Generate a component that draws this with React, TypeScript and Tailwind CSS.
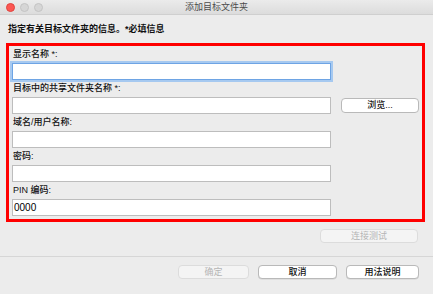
import React from 'react'

const font = { fontFamily: '"Liberation Sans", "Noto Sans CJK SC", sans-serif' }

function Field({ label, value, focused, children }: { label: string; value?: string; focused?: boolean; children?: React.ReactNode }) {
  return (
    <div className="flex flex-col">
      <div className="h-[17px] flex items-center pl-[1px] text-[9px] font-medium text-[#111] leading-none">{label}</div>
      <div className="flex items-center">
        <div
          className={
            focused
              ? 'w-[319px] h-[17px] bg-white border border-[#6ea4e4] ring-2 ring-[#a6c9f0] flex items-center px-[1px] text-[10px] text-black'
              : 'w-[319px] h-[17px] bg-white border border-[#bdbdbd] flex items-center px-[1px] text-[10px] text-black'
          }
        >
          {value}
        </div>
        {children}
      </div>
    </div>
  )
}

function Btn({ label, w, disabled }: { label: string; w: string; disabled?: boolean }) {
  return (
    <div
      className={
        disabled
          ? `${w} h-[14px] rounded-[4px] border border-[#dcdcdc] bg-[#f4f4f4] text-[#b5b5b5] text-[9px] flex items-center justify-center leading-none`
          : `${w} h-[14px] rounded-[4px] border border-[#b9b9b9] bg-white text-[#111] text-[9px] font-medium flex items-center justify-center leading-none shadow-[0_0.5px_0.5px_rgba(0,0,0,0.12)]`
      }
    >
      {label}
    </div>
  )
}

export default function App() {
  return (
    <div className="w-[433px] h-[294px] bg-[#ececec] flex flex-col overflow-hidden" style={font}>
      <div className="h-[15px] relative flex items-center justify-center bg-gradient-to-b from-[#ebebeb] to-[#dcdcdc] border-b border-[#cfcfcf]">
        <div className="absolute left-[6px] top-[3px] flex gap-[5px]">
          <span className="w-[9px] h-[9px] rounded-full bg-[#fc5753] border border-[#e0443e]" />
          <span className="w-[9px] h-[9px] rounded-full bg-[#d6d6d6] border border-[#c4c4c4]" />
          <span className="w-[9px] h-[9px] rounded-full bg-[#d6d6d6] border border-[#c4c4c4]" />
        </div>
        <span className="text-[9px] text-[#4b4b4b] leading-none">添加目标文件夹</span>
      </div>

      <div className="h-[28px] flex items-center pl-[8px] text-[9px] font-bold text-[#111] leading-none">
        指定有关目标文件夹的信息。*必填信息
      </div>

      <div className="ml-[6px] w-[419px] h-[179px] border-[3px] border-[#ff0000] pl-[3px] pb-[4px] flex flex-col">
        <Field label="显示名称 *:" focused />
        <Field label="目标中的共享文件夹名称 *:">
          <div className="ml-[10px]">
            <div className="w-[78px] h-[15px] rounded-[4px] border border-[#b9b9b9] bg-white text-[#111] text-[9px] font-medium flex items-center justify-center leading-none">
              浏览...
            </div>
          </div>
        </Field>
        <Field label="域名/用户名称:" />
        <Field label="密码:" />
        <Field label="PIN 编码:" value="0000" />
      </div>

      <div className="flex justify-end pr-[15px] mt-[7px]">
        <Btn label="连接测试" w="w-[98px]" disabled />
      </div>

      <div className="mt-[13px] h-px bg-[#d6d6d6]" />

      <div className="flex justify-end pr-[14px] mt-[8px] gap-[9px]">
        <Btn label="确定" w="w-[71px]" disabled />
        <Btn label="取消" w="w-[79px]" />
        <Btn label="用法说明" w="w-[73px]" />
      </div>
    </div>
  )
}
